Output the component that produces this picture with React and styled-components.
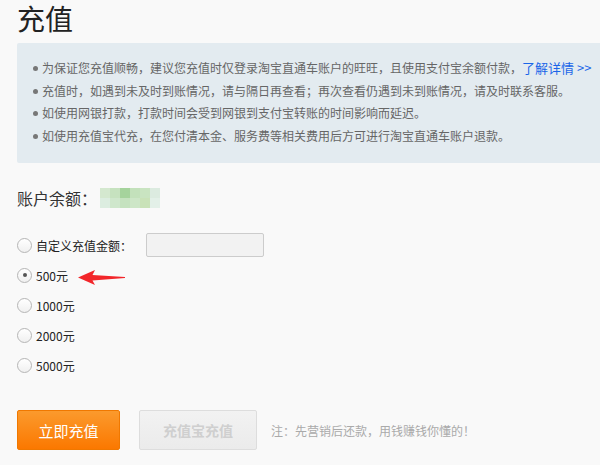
import React, { useState } from 'react'
import styled, { createGlobalStyle } from 'styled-components'

const GlobalStyle = createGlobalStyle`
  html, body {
    margin: 0;
    padding: 0;
    background: #f9f9f9;
    font-family: "Liberation Sans", "Noto Sans CJK SC", sans-serif;
    color: #333;
  }
`

const Page = styled.div`
  width: 600px;
  height: 465px;
  overflow: hidden;
  padding: 0 0 0 17px;
  box-sizing: border-box;
`

const Title = styled.h1`
  margin: 0 0 6px;
  font-size: 28px;
  line-height: 37px;
  font-weight: normal;
  color: #222;
  font-family: "Noto Sans CJK SC", sans-serif;
`

const Notice = styled.ul`
  margin: 0;
  width: 620px;
  box-sizing: border-box;
  height: 120px;
  padding: 14px 0 0 16px;
  list-style: none;
  background: #e3ebf0;
  border-radius: 2px;
`

const NoticeItem = styled.li`
  position: relative;
  padding-left: 9px;
  font-size: 12px;
  line-height: 22.5px;
  color: #666;
  white-space: nowrap;
  font-family: "Noto Sans CJK SC", sans-serif;

  &::before {
    content: '';
    position: absolute;
    left: 0;
    top: 9px;
    width: 5px;
    height: 5px;
    border-radius: 50%;
    background: #777;
  }
`

const MoreLink = styled.a`
  color: #1a66e8;
  font-size: 13px;
  text-decoration: none;
`

const Balance = styled.div`
  display: flex;
  align-items: center;
  margin-top: 24px;
  height: 22px;
  font-size: 16px;
  color: #333;
  font-family: "Noto Sans CJK SC", sans-serif;
`

const Mosaic = styled.div`
  display: grid;
  grid-template-columns: repeat(6, 10px);
  grid-template-rows: repeat(2, 10px);
  margin-left: 3px;
`

const Cell = styled.span`
  background: ${p => p.$c};
`

const Options = styled.div`
  position: relative;
  margin-top: 21px;
  display: flex;
  flex-direction: column;
`

const Row = styled.label`
  display: flex;
  align-items: center;
  height: 30px;
  font-size: 12px;
  color: #222;
  cursor: pointer;
  font-family: "Noto Sans CJK SC", sans-serif;
`

const Radio = styled.span`
  width: 15px;
  height: 15px;
  box-sizing: border-box;
  border-radius: 50%;
  border: 1px solid #b5b5b5;
  background: linear-gradient(#fff, #f0f0f0);
  margin-right: 4px;
  display: flex;
  align-items: center;
  justify-content: center;

  &::after {
    content: '';
    width: 4px;
    height: 4px;
    border-radius: 50%;
    background: ${p => (p.$checked ? '#555' : 'transparent')};
  }
`

const AmountInput = styled.input`
  margin-left: 14px;
  width: 118px;
  height: 24px;
  box-sizing: border-box;
  border: 1px solid #ccc;
  border-radius: 2px;
  background: #f2f2f2;
  outline: none;
`

const Arrow = styled.svg`
  position: absolute;
  left: 61px;
  top: 40px;
`

const Actions = styled.div`
  display: flex;
  align-items: center;
  margin-top: 30px;
`

const PrimaryButton = styled.button`
  width: 103px;
  height: 40px;
  border: 1px solid #f07800;
  border-radius: 2px;
  background: linear-gradient(#fb9a2d, #fb7800);
  color: #fff;
  font-size: 15px;
  font-family: "Noto Sans CJK SC", sans-serif;
  cursor: pointer;
`

const DisabledButton = styled.button`
  margin-left: 19px;
  width: 118px;
  height: 40px;
  border: 1px solid #ddd;
  border-radius: 2px;
  background: linear-gradient(#f2f2f2, #ebebeb);
  color: #cfcfcf;
  font-size: 14px;
  font-weight: bold;
  font-family: "Noto Sans CJK SC", sans-serif;
`

const Note = styled.span`
  margin-left: 14px;
  font-size: 12px;
  color: #aaa;
  font-family: "Noto Sans CJK SC", sans-serif;
`

const mosaic = [
  '#d4e8cf', '#c6e2bf', '#a5d39c', '#c3e1bb', '#c9e4c1', '#dcebe0',
  '#dcede0', '#cfe7cc', '#c5e2bf', '#cde6c7', '#c9e2b8', '#e3f0e8',
]

const amounts = ['500元', '1000元', '2000元', '5000元']

const App = () => {
  const [choice, setChoice] = useState('500元')
  return (
    <Page>
      <GlobalStyle />
      <Title>充值</Title>
      <Notice>
        <NoticeItem>
          为保证您充值顺畅，建议您充值时仅登录淘宝直通车账户的旺旺，且使用支付宝余额付款，
          <MoreLink href="#">了解详情 &gt;&gt;</MoreLink>
        </NoticeItem>
        <NoticeItem>充值时，如遇到未及时到账情况，请与隔日再查看；再次查看仍遇到未到账情况，请及时联系客服。</NoticeItem>
        <NoticeItem>如使用网银打款，打款时间会受到网银到支付宝转账的时间影响而延迟。</NoticeItem>
        <NoticeItem>如使用充值宝代充，在您付清本金、服务费等相关费用后方可进行淘宝直通车账户退款。</NoticeItem>
      </Notice>
      <Balance>
        账户余额：
        <Mosaic>
          {mosaic.map((c, i) => <Cell key={i} $c={c} />)}
        </Mosaic>
      </Balance>
      <Options>
        <Row onClick={() => setChoice('custom')}>
          <Radio $checked={choice === 'custom'} />
          自定义充值金额：
          <AmountInput />
        </Row>
        {amounts.map(a => (
          <Row key={a} onClick={() => setChoice(a)}>
            <Radio $checked={choice === a} />
            {a}
          </Row>
        ))}
        <Arrow width="48" height="15" viewBox="0 0 48 15">
          <path d="M0 7.5 L17 0 L14.5 5 L47 7 L47 8 L14.5 10.5 L17 15 Z" fill="#f2262a" />
        </Arrow>
      </Options>
      <Actions>
        <PrimaryButton>立即充值</PrimaryButton>
        <DisabledButton>充值宝充值</DisabledButton>
        <Note>注：先营销后还款，用钱赚钱你懂的！</Note>
      </Actions>
    </Page>
  )
}

export default App
